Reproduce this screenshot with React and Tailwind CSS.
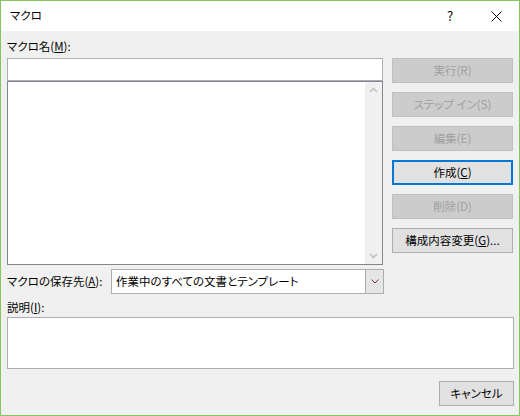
import React from "react";

const font = { fontFamily: '"Noto Sans CJK JP", "Noto Sans", sans-serif' };

function Btn({ children, disabled, focused, className = "" }) {
  let cls = "h-[25px] flex items-center justify-center text-[11.5px] leading-none ";
  if (disabled) cls += "bg-[#cccccc] border border-[#bfbfbf] text-[#a0a0a0]";
  else if (focused) cls += "bg-[#e1e1e1] border-2 border-[#0078d7] text-black";
  else cls += "bg-[#e1e1e1] border border-[#adadad] text-black";
  return <div className={cls + " " + className}>{children}</div>;
}

export default function App() {
  return (
    <div
      className="w-[520px] h-[416px] border border-[#86c45e] bg-[#f0f0f0] flex flex-col text-[11.5px] text-black [font-feature-settings:'palt'] overflow-hidden"
      style={font}
    >
      {/* title bar */}
      <div className="h-[30px] bg-white flex items-center shrink-0">
        <div className="pl-[9px] flex-1">マクロ</div>
        <div className="w-[46px] flex justify-center text-[13px]">?</div>
        <div className="w-[46px] flex justify-center">
          <svg width="11" height="11" viewBox="0 0 11 11">
            <path d="M0.5 0.5 L10.5 10.5 M10.5 0.5 L0.5 10.5" stroke="#000" strokeWidth="1" />
          </svg>
        </div>
      </div>

      {/* body */}
      <div className="flex flex-col pl-[6px] pr-[5px]">
        <div className="h-[27px] pt-[7px] leading-[16px]">
          マクロ名(<span className="underline">M</span>):
        </div>
        <div className="flex gap-[9px]">
          <div className="w-[376px] flex flex-col">
            <div className="h-[23px] bg-white border border-[#abadb3]" />
            <div className="h-[184px] bg-white border border-[#82878f] flex justify-end">
              <div className="w-[17px] bg-[#f0f0f0] flex flex-col items-center justify-between py-[5px]">
                <svg width="9" height="6" viewBox="0 0 9 6">
                  <path d="M1 5 L4.5 1.5 L8 5" stroke="#c2c2c2" strokeWidth="1.6" fill="none" />
                </svg>
                <svg width="9" height="6" viewBox="0 0 9 6">
                  <path d="M1 1 L4.5 4.5 L8 1" stroke="#c2c2c2" strokeWidth="1.6" fill="none" />
                </svg>
              </div>
            </div>
          </div>
          <div className="w-[121px] flex flex-col gap-[9px]">
            <Btn disabled>実行(R)</Btn>
            <Btn disabled>ステップ イン(S)</Btn>
            <Btn disabled>編集(E)</Btn>
            <Btn focused>
              作成(<span className="underline">C</span>)
            </Btn>
            <Btn disabled>削除(D)</Btn>
            <Btn>
              構成内容変更(<span className="underline">G</span>)...
            </Btn>
          </div>
        </div>

        <div className="flex items-center mt-[4px] h-[25px]">
          <div className="w-[104px]">
            マクロの保存先(<span className="underline">A</span>):
          </div>
          <div className="w-[273px] h-[25px] bg-white border border-[#acacac] flex">
            <div className="flex-1 flex items-center pl-[4px]">作業中のすべての文書とテンプレート</div>
            <div className="w-[18px] bg-[#e5e5e5] border-l border-[#acacac] flex items-center justify-center">
              <svg width="8" height="5" viewBox="0 0 8 5">
                <path d="M0.5 0.5 L4 4 L7.5 0.5" stroke="#6a3a3a" strokeWidth="1" fill="none" />
              </svg>
            </div>
          </div>
        </div>

        <div className="h-[23px] pt-[5px] leading-[16px]">
          説明(<span className="underline">I</span>):
        </div>
        <div className="h-[52px] bg-white border border-[#abadb3]" />

        <div className="flex justify-end mt-[12px]">
          <Btn className="w-[75px]">キャンセル</Btn>
        </div>
      </div>
    </div>
  );
}
